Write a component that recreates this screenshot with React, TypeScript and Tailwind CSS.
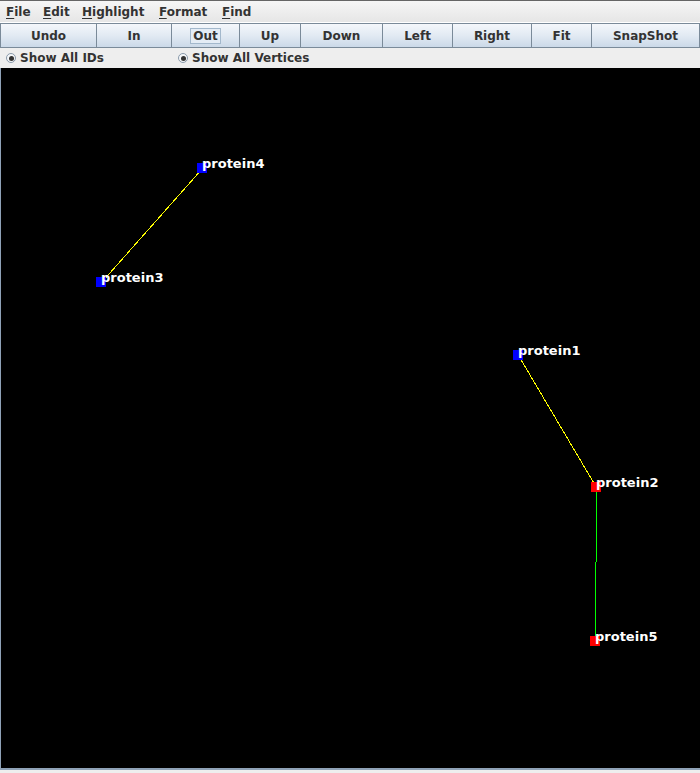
const menus = [
  { key: "F", rest: "ile", w: "w-[37px]" },
  { key: "E", rest: "dit", w: "w-[39px]" },
  { key: "H", rest: "ighlight", w: "w-[77px]" },
  { key: "F", rest: "ormat", w: "w-[63px]" },
  { key: "F", rest: "ind", w: "w-[40px]" },
];

const buttons = [
  { label: "Undo", w: "w-[97px]" },
  { label: "In", w: "w-[75px]" },
  { label: "Out", w: "w-[68px]", focus: true },
  { label: "Up", w: "w-[61px]" },
  { label: "Down", w: "w-[82px]" },
  { label: "Left", w: "w-[70px]" },
  { label: "Right", w: "w-[79px]" },
  { label: "Fit", w: "w-[60px]" },
  { label: "SnapShot", w: "w-[108px]" },
];

// page coordinates of node centres
const nodes = [
  { id: "protein4", x: 202, y: 168, color: "#0000ff" },
  { id: "protein3", x: 101, y: 282, color: "#0000ff" },
  { id: "protein1", x: 518, y: 355, color: "#0000ff" },
  { id: "protein2", x: 596, y: 487, color: "#ff0000" },
  { id: "protein5", x: 595, y: 641, color: "#ff0000" },
];

const edges = [
  { a: "protein4", b: "protein3", color: "#ffff00" },
  { a: "protein1", b: "protein2", color: "#ffff00" },
  { a: "protein2", b: "protein5", color: "#00ff00" },
];

function Radio({ label }: { label: string }) {
  return (
    <div className="flex items-center gap-[4px]">
      <span className="flex h-[10px] w-[10px] items-center justify-center rounded-full border border-[#8a9aab] bg-[#f4f6f8]">
        <span className="h-[5px] w-[5px] rounded-full bg-[#333333]" />
      </span>
      <span>{label}</span>
    </div>
  );
}

export default function App() {
  const pos = (id: string) => nodes.find((n) => n.id === id)!;
  return (
    <div className="flex h-[773px] w-[700px] flex-col bg-[#eeeeee] font-['DejaVu_Sans',sans-serif] text-[12px] font-bold text-[#333333]">
      {/* menu bar */}
      <div className="flex h-[23px] items-center border-t border-[#666666] border-b border-b-[#ffffff] bg-gradient-to-b from-[#f6f6f6] to-[#e6e6e6] pl-[6px]">
        {menus.map((m, i) => (
          <div key={i} className={m.w}>
            <span className="underline underline-offset-2">{m.key}</span>
            {m.rest}
          </div>
        ))}
      </div>

      {/* toolbar */}
      <div className="flex h-[25px] border-l border-[#7a8a99]">
        {buttons.map((b) => (
          <div
            key={b.label}
            className={`${b.w} flex items-center justify-center border-y border-r border-[#7a8a99] bg-gradient-to-b from-[#f4f7fb] via-[#e2eaf3] to-[#cbd9e8] first:w-[96px]`}
          >
            {b.focus ? (
              <span className="border border-[#a3b8cc] bg-[#e4ecf5] px-[2px] leading-[14px]">{b.label}</span>
            ) : (
              b.label
            )}
          </div>
        ))}
      </div>

      {/* options row */}
      <div className="flex h-[20px] items-center pl-[6px]">
        <div className="w-[172px]">
          <Radio label="Show All IDs" />
        </div>
        <Radio label="Show All Vertices" />
      </div>

      {/* graph canvas */}
      <div className="relative h-[702px] border-l border-b-2 border-[#8fa2b7] bg-black">
        <svg className="absolute inset-0 h-full w-full">
          <g transform="translate(-0.5,-67.5)" shapeRendering="crispEdges">
            {edges.map((e) => {
              const a = pos(e.a);
              const b = pos(e.b);
              return <line key={e.a + e.b} x1={a.x} y1={a.y} x2={b.x} y2={b.y} stroke={e.color} strokeWidth={1} />;
            })}
          </g>
          <g transform="translate(-1,-68)">
            {nodes.map((n) => (
              <rect key={n.id} x={n.x - 5} y={n.y - 5} width={10} height={10} fill={n.color} />
            ))}
            {nodes.map((n) => (
              <text
                key={n.id + "-t"}
                x={n.x}
                y={n.y}
                fill="#ffffff"
                fontFamily="DejaVu Sans, sans-serif"
                fontWeight="bold"
                fontSize={13}
              >
                {n.id}
              </text>
            ))}
          </g>
        </svg>
      </div>
      <div className="flex-1 bg-[#eeeeee]" />
    </div>
  );
}
